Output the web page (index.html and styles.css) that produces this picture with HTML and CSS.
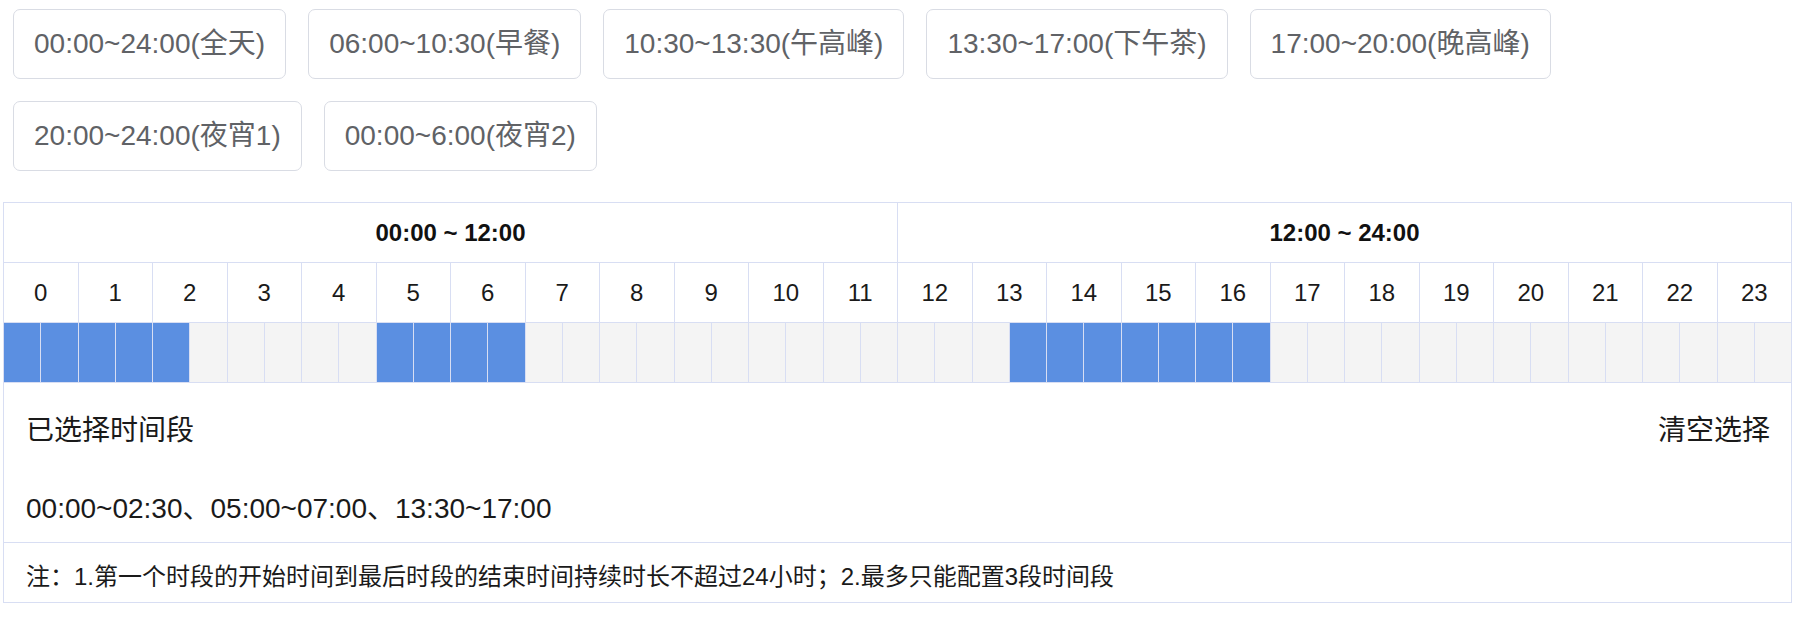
FILE: index.html
```html
<!DOCTYPE html>
<html lang="zh-CN">
<head>
<meta charset="utf-8">
<title>时间段选择</title>
<link rel="stylesheet" href="styles.css">
</head>
<body>
<div class="page">
  <div class="presets">
    <button class="preset">00:00~24:00(全天)</button>
    <button class="preset">06:00~10:30(早餐)</button>
    <button class="preset">10:30~13:30(午高峰)</button>
    <button class="preset">13:30~17:00(下午茶)</button>
    <button class="preset">17:00~20:00(晚高峰)</button>
    <button class="preset">20:00~24:00(夜宵1)</button>
    <button class="preset">00:00~6:00(夜宵2)</button>
  </div>
  <table class="grid">
    <colgroup>
      <col><col><col><col><col><col><col><col><col><col><col><col>
      <col><col><col><col><col><col><col><col><col><col><col><col>
      <col><col><col><col><col><col><col><col><col><col><col><col>
      <col><col><col><col><col><col><col><col><col><col><col><col>
    </colgroup>
    <tr class="head-row">
      <th colspan="24">00:00 ~ 12:00</th>
      <th colspan="24">12:00 ~ 24:00</th>
    </tr>
    <tr class="hour-row">
      <td colspan="2">0</td><td colspan="2">1</td><td colspan="2">2</td><td colspan="2">3</td>
      <td colspan="2">4</td><td colspan="2">5</td><td colspan="2">6</td><td colspan="2">7</td>
      <td colspan="2">8</td><td colspan="2">9</td><td colspan="2">10</td><td colspan="2">11</td>
      <td colspan="2">12</td><td colspan="2">13</td><td colspan="2">14</td><td colspan="2">15</td>
      <td colspan="2">16</td><td colspan="2">17</td><td colspan="2">18</td><td colspan="2">19</td>
      <td colspan="2">20</td><td colspan="2">21</td><td colspan="2">22</td><td colspan="2">23</td>
    </tr>
    <tr class="slot-row">
      <td class="slot on"></td><td class="slot on"></td><td class="slot on"></td><td class="slot on"></td>
      <td class="slot on"></td><td class="slot"></td><td class="slot"></td><td class="slot"></td>
      <td class="slot"></td><td class="slot"></td><td class="slot on"></td><td class="slot on"></td>
      <td class="slot on"></td><td class="slot on"></td><td class="slot"></td><td class="slot"></td>
      <td class="slot"></td><td class="slot"></td><td class="slot"></td><td class="slot"></td>
      <td class="slot"></td><td class="slot"></td><td class="slot"></td><td class="slot"></td>
      <td class="slot"></td><td class="slot"></td><td class="slot"></td><td class="slot on"></td>
      <td class="slot on"></td><td class="slot on"></td><td class="slot on"></td><td class="slot on"></td>
      <td class="slot on"></td><td class="slot on"></td><td class="slot"></td><td class="slot"></td>
      <td class="slot"></td><td class="slot"></td><td class="slot"></td><td class="slot"></td>
      <td class="slot"></td><td class="slot"></td><td class="slot"></td><td class="slot"></td>
      <td class="slot"></td><td class="slot"></td><td class="slot"></td><td class="slot"></td>
    </tr>
    <tr class="info-row">
      <td colspan="48">
        <div class="info">
          <div class="info-top">
            <span class="info-title">已选择时间段</span>
            <span class="info-clear">清空选择</span>
          </div>
          <div class="info-ranges">00:00~02:30、05:00~07:00、13:30~17:00</div>
        </div>
      </td>
    </tr>
    <tr class="note-row">
      <td colspan="48">注：1.第一个时段的开始时间到最后时段的结束时间持续时长不超过24小时；2.最多只能配置3段时间段</td>
    </tr>
  </table>
</div>
</body>
</html>
```

FILE: styles.css
```css
* {
  box-sizing: border-box;
}

body {
  margin: 0;
  background: #ffffff;
  font-family: "Liberation Sans", "Noto Sans CJK SC", sans-serif;
  color: #1f1f1f;
}

.page {
  padding: 9px 0 0 3px;
}

.presets {
  display: flex;
  flex-wrap: wrap;
  gap: 22px;
  padding-left: 10px;
  margin-bottom: 31px;
}

.preset {
  height: 70px;
  padding: 0 20px;
  border: 1px solid #d9dce4;
  border-radius: 7px;
  background: #ffffff;
  color: #606266;
  font-family: "Liberation Sans", "Noto Sans CJK SC", sans-serif;
  font-size: 28px;
  line-height: 68px;
  white-space: nowrap;
}

.grid {
  width: 1789px;
  table-layout: fixed;
  border-collapse: collapse;
  font-size: 24px;
  color: #1a1a1a;
}

.grid th,
.grid td {
  border: 1px solid #d8def3;
  padding: 0;
  text-align: center;
}

.head-row th {
  height: 60px;
  font-weight: bold;
  font-size: 24px;
  color: #111111;
}

.hour-row td {
  height: 60px;
}

.slot-row td {
  height: 60px;
  background: #f4f4f4;
}

.slot-row td.on {
  background: #5b8fe1;
}

.info-row td {
  height: 160px;
  text-align: left;
  vertical-align: top;
}

.info {
  padding: 22px 21px 0 22px;
}

.info-top {
  display: flex;
  justify-content: space-between;
  font-size: 28px;
  line-height: 52px;
}

.info-ranges {
  margin-top: 26px;
  font-size: 28px;
  line-height: 52px;
}

.note-row td {
  height: 60px;
  text-align: left;
  padding: 3px 0 0 22px;
  font-size: 24px;
}
```
